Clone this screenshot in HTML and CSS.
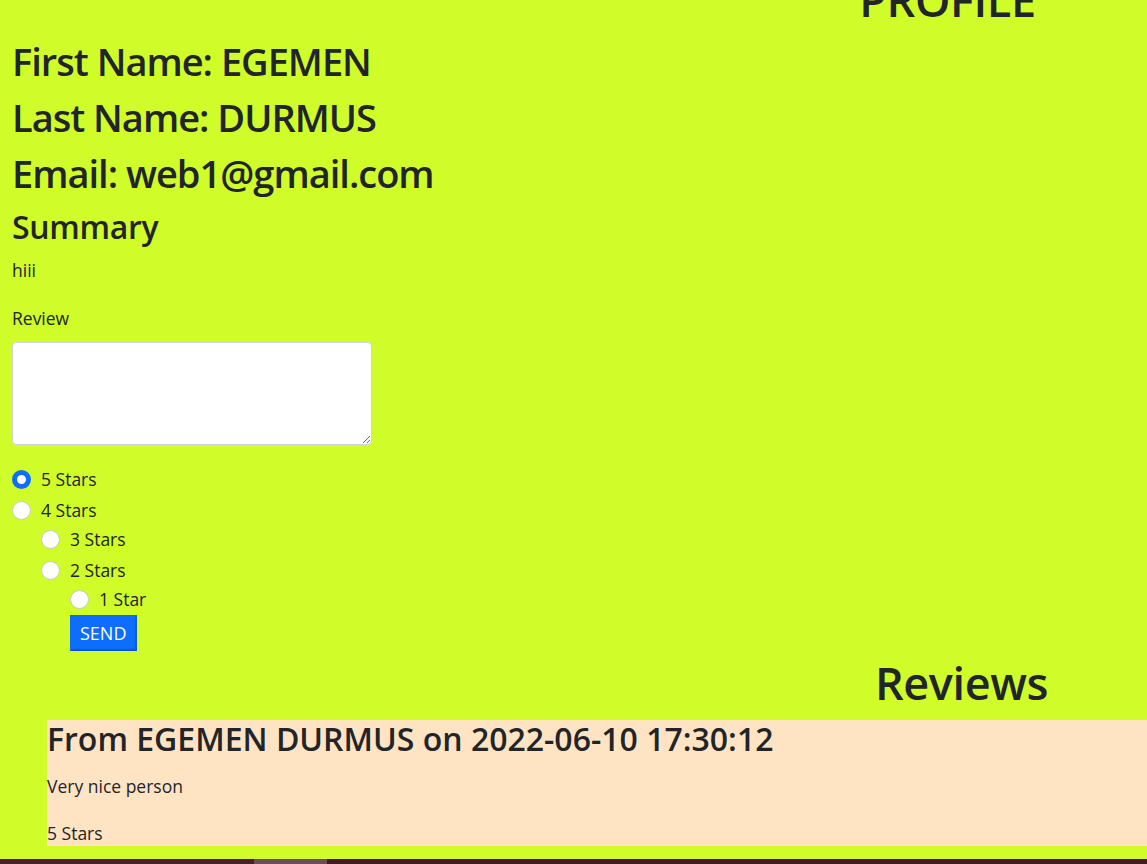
FILE: index.html
```html
<!DOCTYPE html>
<html lang="en">
<head>
<meta charset="utf-8">
<title>Profile</title>
<link rel="stylesheet" href="styles.css">
</head>
<body>
<div class="page">
  <h1 class="title title-profile">PROFILE</h1>
  <h1 class="field">First Name: EGEMEN</h1>
  <h1 class="field">Last Name: DURMUS</h1>
  <h1 class="field field-last">Email: web1@gmail.com</h1>
  <h2 class="summary">Summary</h2>
  <p class="summary-text">hiii</p>
  <form class="review-form">
    <label class="review-label" for="review">Review</label>
    <textarea id="review" class="review-input"></textarea>
    <div class="stars">
      <label class="star-row"><input type="radio" name="stars" checked><span>5 Stars</span></label>
      <label class="star-row"><input type="radio" name="stars"><span>4 Stars</span></label>
      <label class="star-row lvl1"><input type="radio" name="stars"><span>3 Stars</span></label>
      <label class="star-row lvl1"><input type="radio" name="stars"><span>2 Stars</span></label>
      <label class="star-row lvl2"><input type="radio" name="stars"><span>1 Star</span></label>
      <div class="lvl2"><button type="button" class="send">SEND</button></div>
    </div>
  </form>
  <h1 class="title title-reviews">Reviews</h1>
  <div class="review-card">
    <h2 class="review-head">From EGEMEN DURMUS on 2022-06-10 17:30:12</h2>
    <p class="review-body">Very nice person</p>
    <p class="review-stars">5 Stars</p>
  </div>
</div>
<div class="bottom-bar"><span class="bar-a"></span><span class="bar-b"></span><span class="bar-c"></span></div>
</body>
</html>
```

FILE: styles.css
```css
html, body {
  margin: 0;
  padding: 0;
  background: #d0fc29;
}
body {
  font-family: "Open Sans", "Noto Sans", sans-serif;
  color: #212529;
  font-size: 17.5px;
  line-height: 24px;
  height: 864px;
  overflow: hidden;
  display: flex;
  flex-direction: column;
}
.page {
  margin-top: -29px;
  padding: 0 12px;
  flex: 1;
}
h1, h2, p { margin: 0; }
.title {
  font-size: 45px;
  line-height: 58px;
  font-weight: 600;
  letter-spacing: -0.4px;
  margin-bottom: 8px;
  text-align: center;
}
.title-profile { padding-left: 748px; }
.title-reviews { padding-left: 776px; margin-top: 3px; }
.field {
  font-size: 38px;
  line-height: 48px;
  font-weight: 600;
  letter-spacing: -1px;
  margin-bottom: 8px;
}
.field-last { margin-bottom: 11px; }
.summary {
  font-size: 32px;
  line-height: 38px;
  font-weight: 600;
  letter-spacing: -0.3px;
  margin-bottom: 12px;
}
.summary-text { margin-bottom: 24px; }
.review-form { display: flex; flex-direction: column; align-items: flex-start; }
.review-label { margin-bottom: 12px; }
.review-input {
  box-sizing: border-box;
  width: 360px;
  height: 103px;
  border: 1px solid #ced4da;
  border-radius: 4px;
  background: #fff;
  margin: 0 0 22px;
  padding: 6px 12px;
  font: inherit;
}
.stars { display: flex; flex-direction: column; gap: 6px; }
.star-row {
  display: flex;
  align-items: center;
  gap: 10px;
  height: 24px;
}
.star-row:nth-child(2), .star-row:nth-child(4) { margin-top: 1px; }
.star-row:nth-child(3), .star-row:nth-child(5) { margin-top: -1px; }
.star-row input {
  appearance: none;
  -webkit-appearance: none;
  margin: 0;
  width: 19px;
  height: 19px;
  border-radius: 50%;
  background: #fff;
  border: 1px solid #c8c8c8;
  box-sizing: border-box;
}
.star-row input:checked {
  border: 5px solid #0d6efd;
  background: #fff;
}
.lvl1 { padding-left: 29px; }
.lvl2 { padding-left: 58px; }
.send {
  font-family: inherit;
  font-size: 18px;
  line-height: 30px;
  height: 36px;
  padding: 0 8px;
  color: #fff;
  background: #0d6efd;
  border: 2px solid #0d6efd;
  border-right-color: #0b5ed7;
  border-bottom-color: #0a58ca;
  margin-top: -2px;
}
.review-card {
  background: #ffe4c4;
  margin-left: 35px;
  margin-right: -12px;
  height: 126px;
  box-sizing: border-box;
}
.review-head {
  font-size: 32px;
  line-height: 38px;
  font-weight: 600;
  margin-bottom: 16px;
}
.review-body { margin-bottom: 23px; }
.bottom-bar {
  height: 5px;
  display: flex;
  flex: none;
}
.bar-a { width: 254px; background: #4a1f2a; }
.bar-b { width: 73px; background: #6a4d57; }
.bar-c { flex: 1; background: #44191f; }
```
